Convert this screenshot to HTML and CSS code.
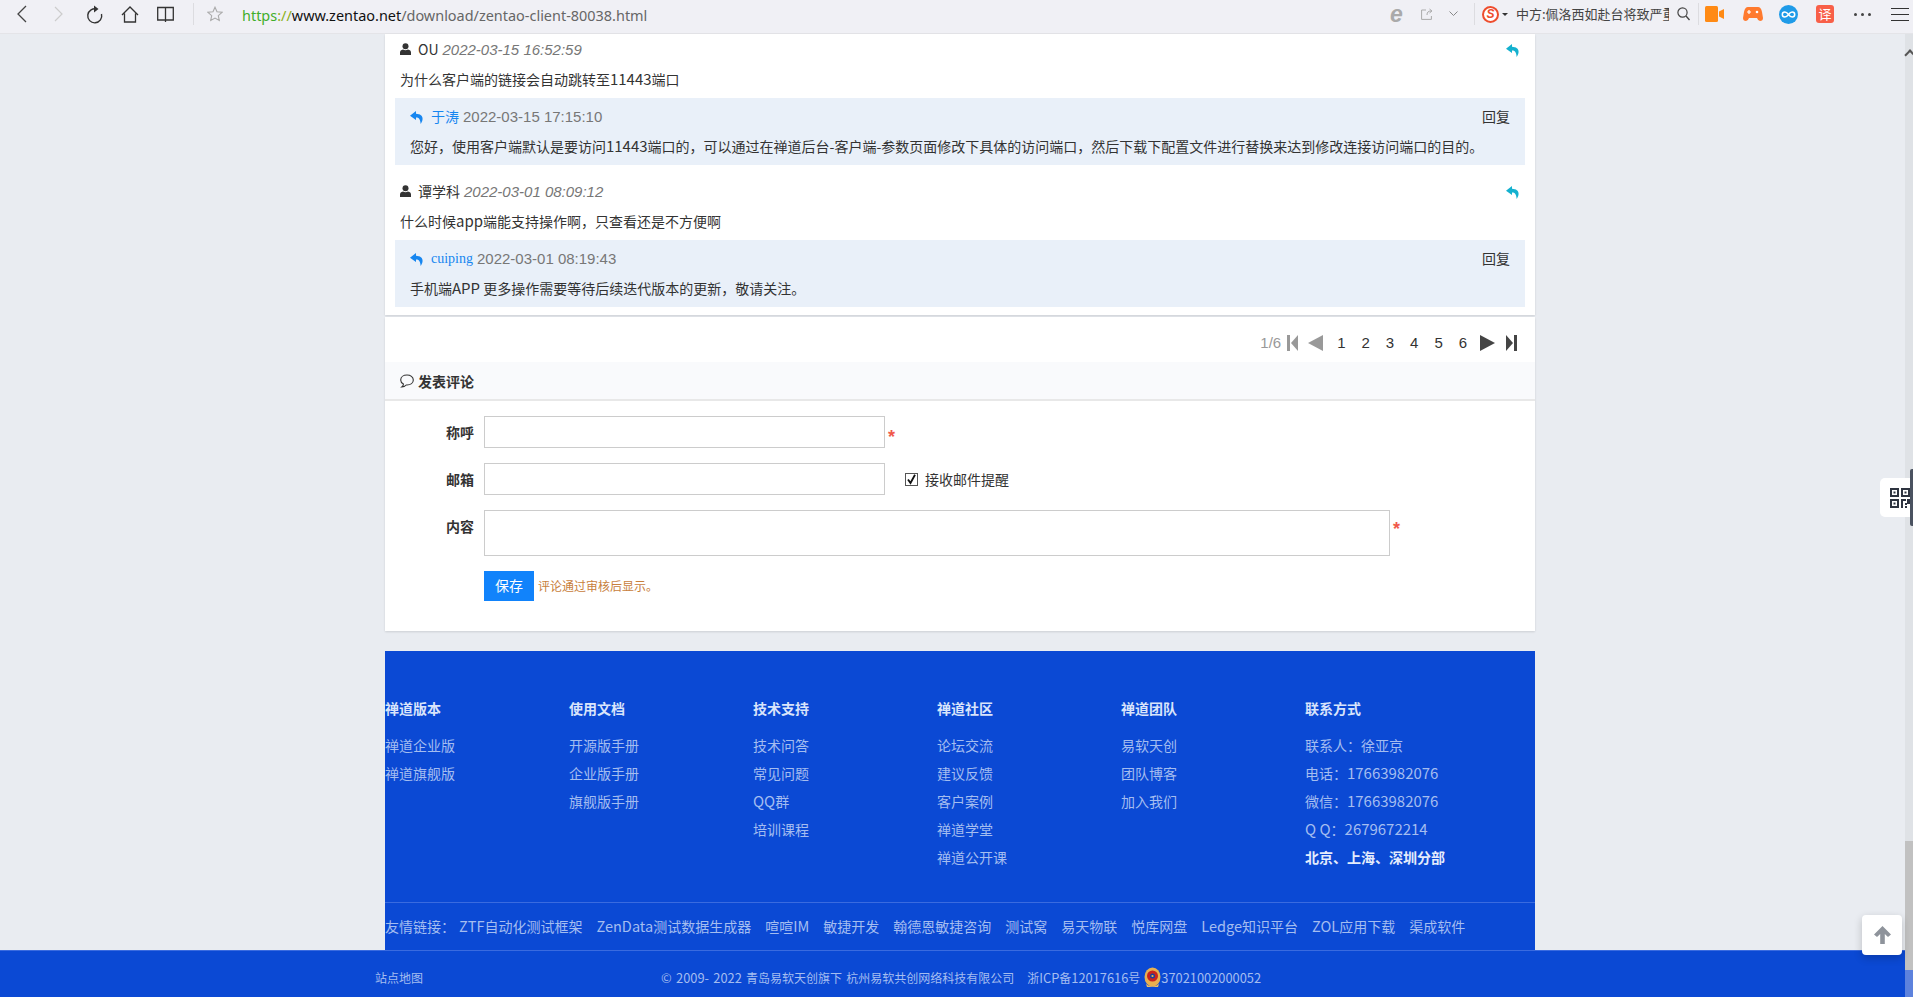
FILE: index.html
```html
<!DOCTYPE html>
<html lang="zh-CN">
<head>
<meta charset="utf-8">
<title>禅道客户端下载</title>
<link rel="stylesheet" href="styles.css">
</head>
<body>
<header class="toolbar">
  <div class="tb-left">
    <svg class="ic" width="11" height="18" viewBox="0 0 11 18"><path d="M10 1 2 9l8 8" fill="none" stroke="#444" stroke-width="1.3"/></svg>
    <svg class="ic fwd" width="9" height="16" viewBox="0 0 9 16"><path d="M1 1l7 7-7 7" fill="none" stroke="#ccc" stroke-width="1.2"/></svg>
    <svg class="ic reload" width="18" height="19" viewBox="0 0 18 19"><path d="M11 4.2A7 7 0 1 0 15.5 9" fill="none" stroke="#333" stroke-width="1.4"/><path d="M8 .5 12.5 4 8 7.5z" fill="#333"/></svg>
    <svg class="ic home" width="18" height="17" viewBox="0 0 18 17"><path d="M1 9 9 1l8 8M3.5 7.5V16h11V7.5" fill="none" stroke="#333" stroke-width="1.3"/></svg>
    <svg class="ic book" width="17" height="17" viewBox="0 0 17 17"><path d="M.7 1.5h15.6v12.5H.7zM8.5 1.5V16" fill="none" stroke="#333" stroke-width="1.3"/></svg>
    <span class="tb-div first"></span>
    <svg class="ic star" width="16" height="16" viewBox="0 0 16 16"><path d="M8 1.2l2 4.6 5 .5-3.7 3.3 1 4.9L8 12.1l-4.3 2.4 1-4.9L1 6.300l5-.5z" fill="none" stroke="#aaa" stroke-width="1.100"/></svg>
    <div class="url"><span class="u-https">https</span><span class="u-sep">://</span><span class="u-host">www.zentao.net</span>/download/zentao-client-80038.html</div>
  </div>
  <div class="tb-right">
    <span class="ie">e</span>
    <svg class="share" width="12" height="12" viewBox="0 0 12 12"><path d="M5 2H.6v9.400h9.800V8M6 7c0-3 1.500-4 4-4M8.500 1l2.500 2-2.500 2" fill="none" stroke="#aaa" stroke-width="1"/></svg>
    <svg class="chev" width="9" height="6" viewBox="0 0 9 6"><path d="M.5.5 4.500 4.500 8.500.5" fill="none" stroke="#888"/></svg>
    <span class="tb-div d2"></span>
    <span class="sogou">S</span><span class="caret"></span>
    <span class="news">中方:佩洛西如赴台将致严重</span>
    <svg class="search" width="13" height="14" viewBox="0 0 13 14"><circle cx="5.500" cy="5.500" r="4.600" fill="none" stroke="#444" stroke-width="1.200"/><path d="M9 9l3.500 4" stroke="#444" stroke-width="1.300"/></svg>
    <span class="tb-div d3"></span>
    <svg class="video" width="19" height="16" viewBox="0 0 19 16"><path d="M0 1.500Q0 0 1.500 0h10Q13 0 13 1.500v13q0 1.500-1.500 1.500h-10Q0 16 0 14.500z" fill="#ff8a14"/><path d="M14 5.500 19 3v10l-5-2.500z" fill="#ff8a14"/></svg>
    <svg class="game" width="20" height="14" viewBox="0 0 20 14"><path d="M5 0h10q3 0 4 5l1 6q0 3-3 3-2 0-3-3H6q-1 3-3 3-3 0-3-3l1-6q1-5 4-5z" fill="#ff7a2e"/><circle cx="14" cy="5" r="1.300" fill="#fff"/><path d="M4 5h4M6 3v4" stroke="#fff" stroke-width="1.200"/></svg>
    <svg class="inf" width="19" height="19" viewBox="0 0 19 19"><circle cx="9.500" cy="9.500" r="9.500" fill="#1f9be8"/><path d="M9.500 9.500C8 7.500 7 7 5.800 7a2.500 2.500 0 0 0 0 5c1.200 0 2.200-.5 3.700-2.500 1.500-2 2.500-2.500 3.700-2.500a2.500 2.500 0 0 1 0 5c-1.200 0-2.200-.5-3.700-2.500z" fill="none" stroke="#fff" stroke-width="1.500"/></svg>
    <span class="trans">译</span>
    <span class="dots"><i></i><i></i><i></i></span>
    <span class="burger"><i></i><i></i><i></i></span>
  </div>
</header>

<main class="page">
  <section class="card comments">
    <article class="comment">
      <div class="meta">
        <svg class="user" width="11" height="12" viewBox="0 0 11 12"><circle cx="5.500" cy="3.200" r="3" fill="#333"/><path d="M0 12V9.500Q0 7 3 6.500q2.500 1.300 5 0 3 .5 3 3V12z" fill="#333"/></svg>
        <span class="name">OU</span> <em class="date">2022-03-15 16:52:59</em>
        <svg class="reply-ic teal" width="14" height="13" viewBox="0 0 14 13"><path d="M6 0 0 4.700 6 9V6.400c3 0 4.300 1.800 4.700 6.600 3.800-6 1.600-10-4.700-10.200z" fill="#14b1cf"/></svg>
      </div>
      <p class="body">为什么客户端的链接会自动跳转至<span class="n">11443</span>端口</p>
      <div class="answer">
        <div class="meta">
          <svg class="reply-ic blue" width="14" height="13" viewBox="0 0 14 13"><path d="M6 0 0 4.700 6 9V6.400c3 0 4.300 1.800 4.700 6.600 3.800-6 1.600-10-4.700-10.200z" fill="#1686f0"/></svg>
          <span class="author">于涛</span> <span class="time">2022-03-15 17:15:10</span>
          <a class="reply-link">回复</a>
        </div>
        <p class="body">您好，使用客户端默认是要访问<span class="n">11443</span>端口的，可以通过在禅道后台-客户端-参数页面修改下具体的访问端口，然后下载下配置文件进行替换来达到修改连接访问端口的目的。</p>
      </div>
    </article>
    <article class="comment">
      <div class="meta">
        <svg class="user" width="11" height="12" viewBox="0 0 11 12"><circle cx="5.500" cy="3.200" r="3" fill="#333"/><path d="M0 12V9.500Q0 7 3 6.500q2.500 1.300 5 0 3 .5 3 3V12z" fill="#333"/></svg>
        <span class="name">谭学科</span> <em class="date">2022-03-01 08:09:12</em>
        <svg class="reply-ic teal" width="14" height="13" viewBox="0 0 14 13"><path d="M6 0 0 4.700 6 9V6.400c3 0 4.300 1.800 4.700 6.600 3.800-6 1.600-10-4.700-10.200z" fill="#14b1cf"/></svg>
      </div>
      <p class="body">什么时候<span class="n">app</span>端能支持操作啊，只查看还是不方便啊</p>
      <div class="answer">
        <div class="meta">
          <svg class="reply-ic blue" width="14" height="13" viewBox="0 0 14 13"><path d="M6 0 0 4.700 6 9V6.400c3 0 4.300 1.800 4.700 6.600 3.800-6 1.600-10-4.700-10.200z" fill="#1686f0"/></svg>
          <span class="author serif">cuiping</span> <span class="time">2022-03-01 08:19:43</span>
          <a class="reply-link">回复</a>
        </div>
        <p class="body">手机端<span class="n">APP</span> 更多操作需要等待后续迭代版本的更新，敬请关注。</p>
      </div>
    </article>
  </section>

  <section class="card form-card">
    <nav class="pager">
      <span class="count">1/6</span>
      <svg class="pg first" width="11" height="16" viewBox="0 0 11 16"><path d="M0 0h3v16H0zM11 0v16L4 8z" fill="#999"/></svg>
      <svg class="pg prev" width="15" height="16" viewBox="0 0 15 16"><path d="M15 0v16L0 8z" fill="#999"/></svg>
      <a>1</a><a>2</a><a>3</a><a>4</a><a>5</a><a>6</a>
      <svg class="pg next" width="15" height="16" viewBox="0 0 15 16"><path d="M0 0v16l15-8z" fill="#444"/></svg>
      <svg class="pg last" width="11" height="16" viewBox="0 0 11 16"><path d="M0 0v16l7-8zM8 0h3v16H8z" fill="#444"/></svg>
    </nav>
    <h3 class="form-title">
      <svg width="14" height="14" viewBox="0 0 14 14"><path d="M7 1C3.500 1 .7 3 .7 6c0 1.800 1 3.200 2.700 4.100C3.300 11.500 2.500 12.500 1.800 13c2 0 3.500-1 4.400-2 .3 0 .5 0 .8 0 3.500 0 6.300-2 6.300-5S10.500 1 7 1z" fill="none" stroke="#333" stroke-width="1.100"/></svg>
      发表评论
    </h3>
    <form class="form">
      <label class="lbl">称呼</label>
      <div class="field"><input class="input" type="text"><span class="req">*</span></div>
      <label class="lbl">邮箱</label>
      <div class="field"><input class="input" type="text">
        <span class="check"><svg width="13" height="13" viewBox="0 0 13 13"><rect x=".5" y=".5" width="12" height="12" fill="#fff" stroke="#555"/><path d="M3 6.500 5.500 10 10 1.800" fill="none" stroke="#111" stroke-width="1.800"/></svg>接收邮件提醒</span>
      </div>
      <label class="lbl lbl-top">内容</label>
      <div class="field top"><textarea class="textarea"></textarea><span class="req">*</span></div>
      <span></span>
      <div class="field"><button class="save" type="button">保存</button><span class="hint">评论通过审核后显示。</span></div>
    </form>
  </section>

  <footer class="foot">
    <div class="cols">
      <div class="col"><h4>禅道版本</h4><a>禅道企业版</a><a>禅道旗舰版</a></div>
      <div class="col"><h4>使用文档</h4><a>开源版手册</a><a>企业版手册</a><a>旗舰版手册</a></div>
      <div class="col"><h4>技术支持</h4><a>技术问答</a><a>常见问题</a><a><span class="n">QQ</span>群</a><a>培训课程</a></div>
      <div class="col"><h4>禅道社区</h4><a>论坛交流</a><a>建议反馈</a><a>客户案例</a><a>禅道学堂</a><a>禅道公开课</a></div>
      <div class="col"><h4>禅道团队</h4><a>易软天创</a><a>团队博客</a><a>加入我们</a></div>
      <div class="col"><h4>联系方式</h4><a>联系人<span class="tc">：</span>徐亚京</a><a>电话<span class="tc">：</span><span class="n">17663982076</span></a><a>微信<span class="tc">：</span><span class="n">17663982076</span></a><a><span class="n">Q Q</span><span class="tc">：</span><span class="n">2679672214</span></a><a class="strong">北京、上海、深圳分部</a></div>
    </div>
    <div class="friends"><span class="lead">友情链接<span class="tc">：</span></span><a><span class="n">ZTF</span>自动化测试框架</a><a><span class="n">ZenData</span>测试数据生成器</a><a>喧喧<span class="n">IM</span></a><a>敏捷开发</a><a>翰德恩敏捷咨询</a><a>测试窝</a><a>易天物联</a><a>悦库网盘</a><a><span class="n">Ledge</span>知识平台</a><a><span class="n">ZOL</span>应用下载</a><a>渠成软件</a></div>
  </footer>
</main>

<div class="bottom">
  <a class="map">站点地图</a>
  <span class="copy"><span class="n">© 2009- 2022</span> 青岛易软天创旗下 杭州易软共创网络科技有限公司</span>
  <span class="icp">浙<span class="n">ICP</span>备<span class="n">12017616</span>号</span>
  <svg class="emblem" width="17" height="21" viewBox="0 0 17 21"><ellipse cx="8.500" cy="10" rx="8" ry="9.500" fill="#e8b050"/><path d="M2 17q6.500 5 13 0l-1 3H3z" fill="#f0c060"/><circle cx="8.500" cy="9" r="5.500" fill="#c8231d"/><circle cx="8.500" cy="9" r="2.500" fill="#1a3da0"/><circle cx="8.500" cy="9" r="1.100" fill="#f2c040"/></svg>
  <span class="pol n">37021002000052</span>
</div>

<aside class="scrollbar"><span class="thumb"></span><span class="sb-down"></span></aside>
<span class="sb-up"></span>
<div class="qr">
  <svg width="20" height="20" viewBox="0 0 20 20"><path d="M0 0h9v9H0zM2 2v5h5V2zM3.500 3.500h2v2h-2zM11 0h9v9h-9zM13 2v5h5V2zM14.500 3.500h2v2h-2zM0 11h9v9H0zM2 13v5h5v-5zM3.500 14.500h2v2h-2zM11 11h5v2h-3v7h-2zM17 11h3v5h-3zM15 15h2v2h-2zM15 18h2v2h-2z" fill="#2e3440" fill-rule="evenodd"/></svg>
</div>
<span class="handle"></span>
<div class="totop"><svg width="19" height="20" viewBox="0 0 19 20"><path d="M9.500 1 18 9.500 15 12 11.800 9v10H7.200V9L4 12 1 9.500z" fill="#8e939b"/></svg></div>
</body>
</html>
```
FILE: styles.css
```css
* { box-sizing: border-box; }
html, body { margin: 0; height: 997px; overflow: hidden; }
body {
  background: #e9ecf1;
  color: #333;
  font: 14px/20px "Noto Sans CJK SC", "Liberation Sans", sans-serif;
  position: relative;
}
a { color: inherit; text-decoration: none; }
p, h3, h4 { margin: 0; }
.n { font-size: 1.07em; }
.tc { font-family: "Noto Sans CJK TC", sans-serif; }

/* browser chrome */
.toolbar {
  height: 34px;
  background: #f0f0f5;
  border-bottom: 1px solid #e4e4e8;
  display: flex;
  align-items: center;
  justify-content: space-between;
  padding: 0 4px 5px 16px;
}
.tb-left, .tb-right { display: flex; align-items: center; height: 100%; }
.ic { flex: none; display: block; }
.fwd { margin-left: 27px; }
.reload { margin-left: 23px; }
.home { margin-left: 17px; }
.book { margin-left: 18px; }
.tb-div { width: 1px; height: 22px; background: #dcdce0; flex: none; }
.tb-div.first { margin-left: 19px; }
.star { margin-left: 13px; }
.url {
  margin: 3px 0 0 19px;
  font: 14.450px/20px "Noto Sans", sans-serif;
  color: #666;
  white-space: nowrap;
}
.u-https { color: #3fae2a; }
.u-sep { color: #8aaf1a; }
.u-host { color: #111; }
.ie { font: italic bold 23px/20px "Liberation Sans", sans-serif; color: #aaa; width: 13px; }
.share { margin-left: 18px; }
.chev { margin-left: 16px; }
.d2 { margin-left: 16px; }
.sogou {
  margin-left: 7px; width: 17px; height: 17px; border-radius: 50%;
  background: #fff; border: 2px solid #ee4d2d; color: #ee4d2d;
  font: italic bold 12px/13px "Liberation Sans", sans-serif; text-align: center;
}
.caret { margin-left: 3px; border: 3px solid transparent; border-top: 3px solid #333; border-bottom: 0; width: 0; height: 0; }
.news {
  margin-left: 8px; width: 153px; overflow: hidden; white-space: nowrap;
  font-size: 13px; color: #444; line-height: 20px;
}
.search { margin-left: 8px; }
.d3 { margin-left: 8px; }
.video { margin-left: 6px; }
.game { margin-left: 19px; }
.inf { margin-left: 16px; }
.trans {
  margin-left: 18px; width: 18px; height: 18px; border-radius: 3px;
  background: #f85f48; color: #fff; font-size: 13px; line-height: 18px; text-align: center;
}
.dots { margin-left: 20px; display: flex; gap: 4px; }
.dots i { width: 3px; height: 3px; background: #444; border-radius: 50%; }
.burger { margin-left: 20px; width: 18px; display: flex; flex-direction: column; gap: 5px; }
.burger i { height: 1px; background: #333; }

/* page */
.page { width: 1150px; margin-left: 385px; }
.card { background: #fff; box-shadow: 0 1px 2px rgba(0,0,0,.12); }
.comments { padding: 1px 10px 8px; height: 281px; }
.comment + .comment { margin-top: 12px; }
.meta { height: 30px; display: flex; align-items: center; padding: 0 5px 2px; white-space: nowrap; gap: 4px; color: #333; }
.body { height: 30px; line-height: 28px; padding: 0 5px; white-space: nowrap; color: #333; font-size: 14px; }
.name { margin-left: 3px; font-size: 14px; }
.date { font-family: "Liberation Sans", sans-serif; color: #777; font-size: 15px; margin-top: 2px; }
.reply-ic { margin-top: 3px; }
.reply-ic.blue { margin-top: 2px; }
.reply-ic.teal { margin-left: auto; }
.answer { margin-top: 3px; height: 67px; padding: 4px 10px 3px; background: #e9f0f9; }
.author { color: #1686f0; margin-left: 3px; }
.author.serif { font: 14px/20px "Liberation Serif", serif; margin-top: 2px; }
.time { font-family: "Liberation Sans", sans-serif; color: #777; font-size: 15px; margin-top: 2px; }
.reply-link { margin-left: auto; }

.form-card { margin-top: 2px; height: 314px; }
.pager { height: 45px; display: flex; align-items: center; padding: 7px 18px 0 0; justify-content: flex-end; font-family: "Liberation Sans", sans-serif; }
.pager a { width: 24.300px; text-align: center; font-size: 15px; }
.count { color: #999; font-size: 15px; }
.pg { flex: none; }
.pg.first { margin-left: 6px; }
.pg.prev { margin: 0 6px 0 10px; }
.pg.next { margin-left: 5px; }
.pg.last { margin-left: 11px; }
.form-title {
  height: 39px; background: #f9fafc; border-bottom: 2px solid #e8e8e8;
  display: flex; align-items: center; gap: 4px; padding-left: 15px; font-size: 14px; font-weight: 700; color: #333;
}
.form {
  display: grid; grid-template-columns: 89px 1fr; column-gap: 10px; row-gap: 15px;
  padding-top: 15px;
}
.lbl { text-align: right; font-weight: 700; line-height: 32px; font-size: 14px; }
.field { display: flex; align-items: center; }
.field.top { align-items: flex-start; }
.input { width: 401px; height: 32px; border: 1px solid #ccc; background: #fff; padding: 0; }
.textarea { width: 906px; height: 46px; border: 1px solid #ccc; padding: 0; resize: none; display: block; }
.req { color: #f0594a; margin: 9px 0 0 3px; font: bold 18px/18px "Liberation Sans", sans-serif; }
.field.top .req { margin-top: 10px; }
.check { margin-left: 20px; display: flex; align-items: center; gap: 7px; }
.save { width: 50px; height: 30px; background: #1183fb; color: #fff; border: 0; padding: 0 0 2px; font: 14px/28px "Noto Sans CJK SC", sans-serif; }
.hint { margin-left: 4px; color: #c8803c; font-size: 12px; }

/* footer */
.foot { margin-top: 20px; height: 299px; background: #0b49d4; color: #a4bdf0; }
.cols { height: 252px; display: flex; padding-top: 47px; border-bottom: 1px solid #3a6bdf; }
.col { width: 184px; display: flex; flex-direction: column; }
.col h4 { color: #d9e4fb; font-size: 14px; line-height: 20px; font-weight: 700; margin-bottom: 13px; }
.col a { line-height: 28px; white-space: nowrap; }
.col a.strong { color: #e4ecfc; font-weight: 700; }
.friends { height: 47px; display: flex; align-items: center; white-space: nowrap; gap: 14px; padding-bottom: 2px; }
.friends .n { font-size: 1.040em; }
.lead { margin-right: -10px; }

.bottom {
  height: 47px; background: #0b49d4; border-top: 1px solid #3a6bdf; color: #a4bdf0;
  position: absolute; left: 0; right: 0; top: 950px;
  display: flex; align-items: center; font-size: 12px; padding: 7px 0 0 375px; white-space: nowrap;
}
.copy { margin-left: 238px; word-spacing: 1.500px; }
.icp { margin-left: 13px; }
.emblem { margin-left: 4px; flex: none; }

/* overlays */
.scrollbar { position: absolute; top: 34px; right: 0; bottom: 0; width: 8px; background: rgba(210,214,218,.45); }
.thumb { position: absolute; left: 0; right: 0; top: 807px; height: 129px; background: #c1c1c1; }
.sb-down { position: absolute; left: 0; right: 0; top: 936px; bottom: 0; background: #5d82dd; }
.sb-up { position: absolute; right: -1px; top: 51px; width: 8px; height: 8px; border-left: 2px solid #555; border-top: 2px solid #555; transform: rotate(45deg); }
.qr {
  position: absolute; left: 1880px; top: 478px; width: 33px; height: 39px; padding: 10px 0 0 10px;
  background: #fff; border-radius: 5px 0 0 5px;
}
.handle { position: absolute; right: 0; top: 469px; width: 3px; height: 57px; background: #4a5260; border-radius: 2px 0 0 2px; }
.totop {
  position: absolute; left: 1862px; top: 915px; width: 40px; height: 40px;
  background: #fff; border-radius: 4px; box-shadow: 0 3px 8px rgba(0,0,0,.2);
  display: flex; align-items: center; justify-content: center;
}
```
